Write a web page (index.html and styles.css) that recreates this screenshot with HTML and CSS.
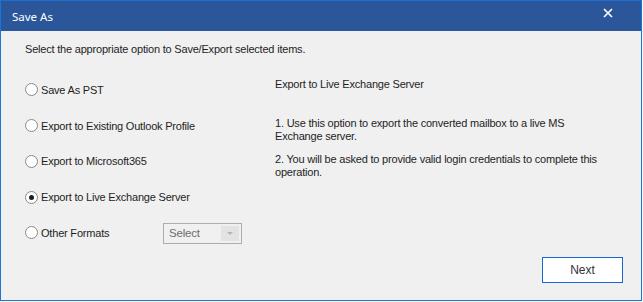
FILE: index.html
```html
<!DOCTYPE html>
<html lang="en">
<head>
    <meta charset="UTF-8">
    <title>Save As</title>
    <link rel="stylesheet" href="styles.css">
</head>
<body>
    <div class="dialog">
        <div class="title-bar">
            <span class="title">Save As</span>
            <svg class="close-button" width="10" height="10" viewBox="0 0 10 10">
                <path d="M1 1 L9 9 M9 1 L1 9" stroke="#ffffff" stroke-width="1.6" fill="none"/>
            </svg>
        </div>
        <div class="dialog-body">
            <p class="intro">Select the appropriate option to Save/Export selected items.</p>
            <div class="main">
                <div class="options">
                    <label class="option"><span class="radio"></span>Save As PST</label>
                    <label class="option"><span class="radio"></span>Export to Existing Outlook Profile</label>
                    <label class="option"><span class="radio"></span>Export to Microsoft365</label>
                    <label class="option"><span class="radio checked"></span>Export to Live Exchange Server</label>
                    <div class="option">
                        <label class="option-label"><span class="radio"></span>Other Formats</label>
                        <div class="select">
                            <span class="select-text">Select</span>
                            <span class="select-arrow"></span>
                        </div>
                    </div>
                </div>
                <div class="info">
                    <p class="info-title">Export to Live Exchange Server</p>
                    <p>1. Use this option to export the converted mailbox to a live MS<br>Exchange server.</p>
                    <p>2. You will be asked to provide valid login credentials to complete this operation.</p>
                </div>
            </div>
            <div class="footer">
                <button class="next-button">Next</button>
            </div>
        </div>
    </div>
</body>
</html>
```

FILE: styles.css
```css
* {
    margin: 0;
    padding: 0;
    box-sizing: border-box;
}

body {
    font-family: 'Liberation Sans', Arial, sans-serif;
    font-size: 11px;
    letter-spacing: -0.2px;
    color: #1e1e1e;
    background: #f7f7f7;
    width: 643px;
    height: 302px;
    overflow: hidden;
}

.dialog {
    width: 642px;
    height: 301px;
    border: 1px solid #1976d2;
    border-top-color: #1c6fd1;
    background: #f0f0f0;
    display: flex;
    flex-direction: column;
}

.title-bar {
    height: 30px;
    background: #2b579a;
    color: #ffffff;
    display: flex;
    align-items: center;
    justify-content: space-between;
    padding: 0 28px 0 11px;
}

.title {
    font-family: 'Noto Sans', sans-serif;
    font-size: 11.5px;
    letter-spacing: 0;
}

.close-button {
    margin-top: -7px;
}

.dialog-body {
    flex: 1;
    padding: 11px 18px 0 24px;
    display: flex;
    flex-direction: column;
}

.intro {
    line-height: 14px;
}

.main {
    display: flex;
    margin-top: 16px;
}

.options {
    width: 250px;
    flex-shrink: 0;
    display: flex;
    flex-direction: column;
}

.option {
    height: 35.75px;
    display: flex;
    align-items: center;
}

.option-label {
    display: flex;
    align-items: center;
    width: 138px;
}

.radio {
    width: 13px;
    height: 13px;
    border: 1px solid #8a8a8a;
    border-radius: 50%;
    background: #ffffff;
    margin-right: 3px;
    display: flex;
    align-items: center;
    justify-content: center;
}

.radio.checked::after {
    content: '';
    width: 5px;
    height: 5px;
    border-radius: 50%;
    background: #1e1e1e;
}

.select {
    width: 79px;
    height: 21px;
    border: 1px solid #adadad;
    background: #f0f0f0;
    display: flex;
    padding: 2px;
    margin-top: 1px;
}

.select-text {
    flex: 1;
    color: #6d6d6d;
    line-height: 15px;
    padding-left: 3px;
    font-size: 11.5px;
}

.select-arrow {
    width: 18px;
    background: #e3e3e3;
    display: flex;
    align-items: center;
    justify-content: center;
}

.select-arrow::after {
    content: '';
    border-left: 3px solid transparent;
    border-right: 3px solid transparent;
    border-top: 3px solid #b5b5b5;
}

.info {
    width: 350px;
    flex-shrink: 0;
    padding-top: 6px;
    line-height: 13.5px;
}

.info p {
    margin-bottom: 9px;
}

.info .info-title {
    margin-bottom: 25px;
}

.footer {
    margin-top: auto;
    margin-bottom: 17px;
    display: flex;
    justify-content: flex-end;
}

.next-button {
    width: 81px;
    height: 26px;
    background: #ffffff;
    border: 1px solid #1766d1;
    font-family: 'Liberation Sans', Arial, sans-serif;
    font-size: 12px;
    color: #333333;
}
```
